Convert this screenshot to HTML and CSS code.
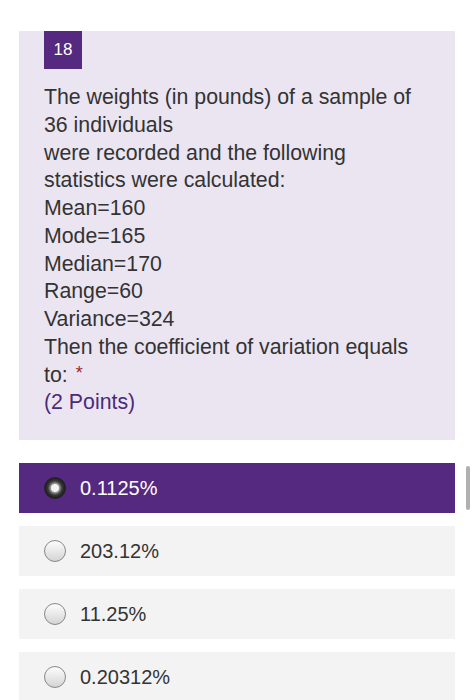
FILE: index.html
```html
<!DOCTYPE html>
<html>
<head>
<meta charset="utf-8">
<link rel="stylesheet" href="styles.css">
</head>
<body>
<div class="page">
  <div class="card">
    <div class="badge">18</div>
    <div class="question">
      <div>The weights (in pounds) of a sample of 36 individuals</div>
      <div>were recorded and the following statistics were calculated:</div>
      <div>Mean=160</div>
      <div>Mode=165</div>
      <div>Median=170</div>
      <div>Range=60</div>
      <div>Variance=324</div>
      <div>Then the coefficient of variation equals to:<span class="req">*</span></div>
      <div class="points">(2 Points)</div>
    </div>
  </div>
  <div class="options">
    <div class="option selected"><span class="radio on"></span><span>0.1125%</span></div>
    <div class="option"><span class="radio"></span><span>203.12%</span></div>
    <div class="option"><span class="radio"></span><span>11.25%</span></div>
    <div class="option"><span class="radio"></span><span>0.20312%</span></div>
  </div>
  <div class="scrollbar"></div>
</div>
</body>
</html>
```
FILE: styles.css
```css
* { box-sizing: border-box; }
html, body { margin: 0; padding: 0; background: #fff; }
body { font-family: "Liberation Sans", Arial, sans-serif; color: #333; }
.page { padding: 31px 20px 0 19px; position: relative; height: 700px; overflow: hidden; }
.card { background: #ebe5f2; padding: 0 30px 23px 25px; width: 436px; }
.badge { width: 38px; height: 38px; background: #55297f; color: #fff; font-size: 17px; display: flex; align-items: center; justify-content: center; }
.question { margin-top: 15px; font-size: 21.3px; line-height: 27.75px; color: #333; }
.req { display: inline-block; margin-left: 8px; color: #a4262c; font-size: 18px; vertical-align: top; line-height: 22px; }
.points { color: #4b2a7b; }
.options { margin-top: 23px; display: flex; flex-direction: column; gap: 13px; width: 436px; }
.option { height: 50px; background: #f3f3f3; display: flex; align-items: center; padding-left: 25px; gap: 14px; font-size: 20px; color: #333; }
.option.selected { background: #55297f; color: #fff; }
.radio { width: 22px; height: 22px; border-radius: 50%; border: 1px solid #888; background: linear-gradient(#fdfdfd, #d4d4d4); flex: none; }
.radio.on { background: radial-gradient(circle, #f4f4f4 0 3.5px, #9a9a9a 4.5px, #3a3a3a 7px, #151515 11px); border-color: #222; }
.scrollbar { position: absolute; left: 466px; top: 466px; width: 4px; height: 44px; background: #b0b0b0; border-radius: 2px; }
```
